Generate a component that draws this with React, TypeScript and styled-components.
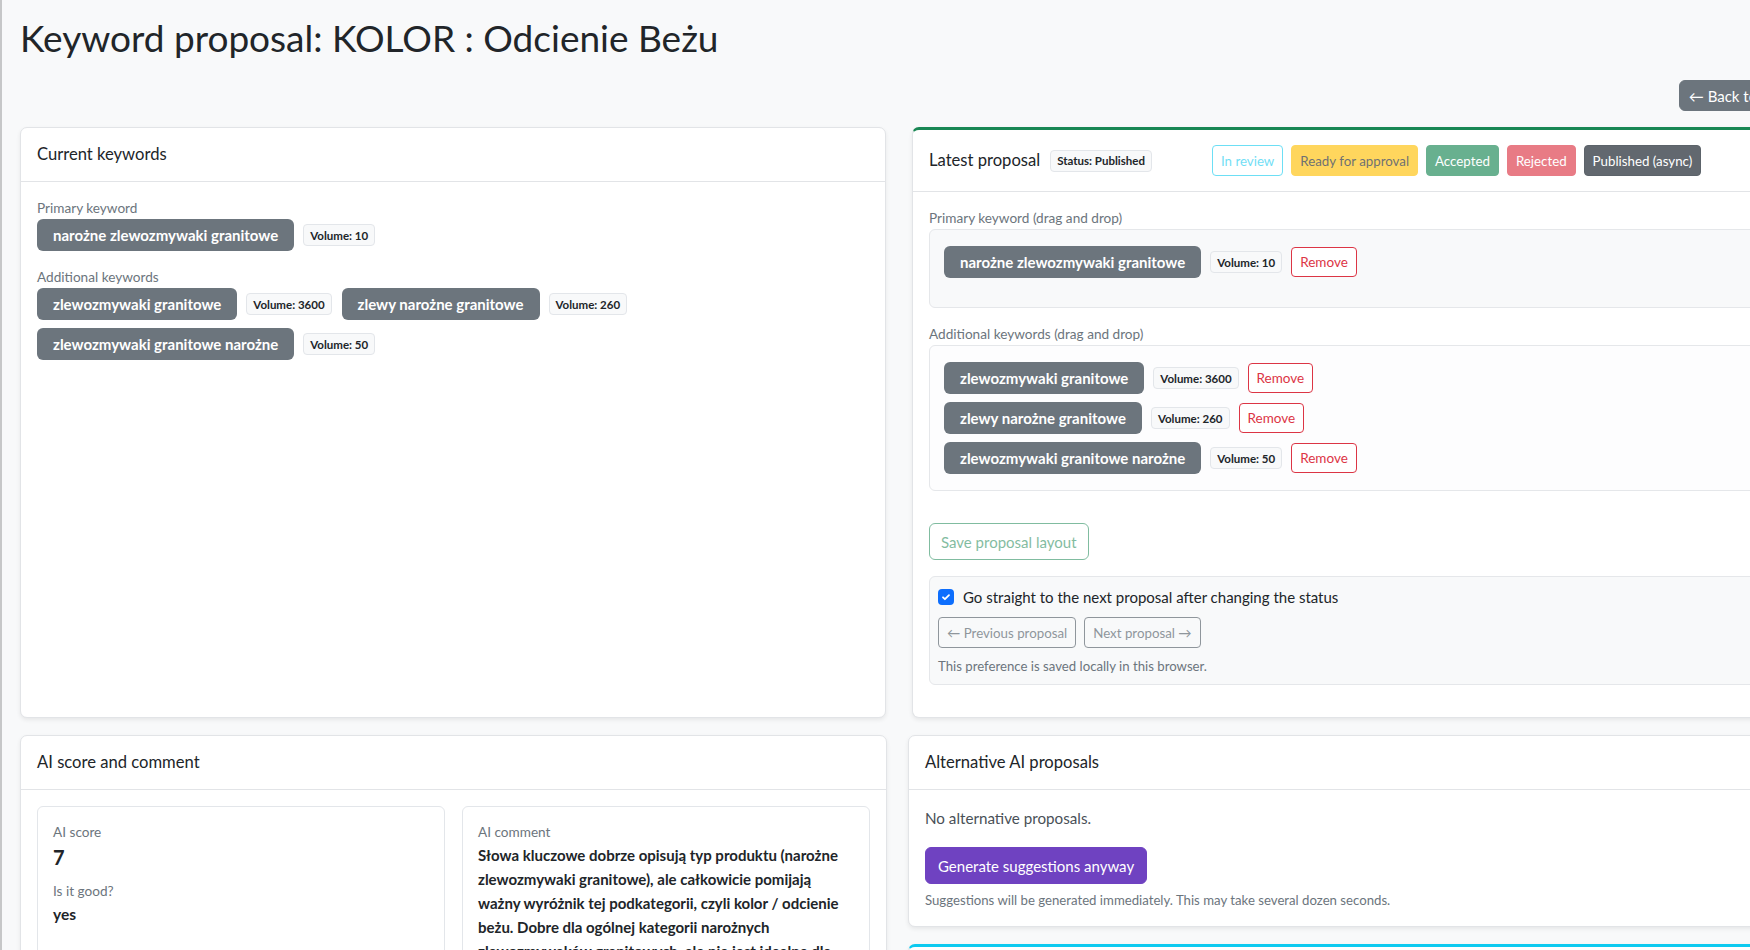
import React from 'react';
import styled, { createGlobalStyle } from 'styled-components';

const GlobalStyle = createGlobalStyle`
    html, body {
        margin: 0;
        padding: 0;
        background: #f8f9fa;
        overflow: hidden;
    }

    body {
        font-family: Lato, 'Liberation Sans', sans-serif;
        color: #212529;
    }

    * {
        box-sizing: border-box;
    }
`;

const Page = styled.div`
    width: 1812px;
    min-height: 950px;
    border-left: 2px solid #c6c7c8;
    padding: 14px 22px 0 18px;
`;

const Title = styled.h1`
    margin: 0;
    font-size: 37px;
    font-weight: 400;
    line-height: 48px;
`;

const Toolbar = styled.div`
    display: flex;
    justify-content: flex-end;
    margin-top: 18px;
`;

const BackButton = styled.button`
    height: 31px;
    padding: 0 9px;
    background: #6c757d;
    color: #fff;
    border: 1px solid #6c757d;
    border-radius: 6px;
    font-family: inherit;
    font-size: 15px;
`;

const TopRow = styled.div`
    display: grid;
    grid-template-columns: 866px 866px;
    column-gap: 26px;
    margin-top: 16px;
`;

const BottomRow = styled.div`
    display: grid;
    grid-template-columns: 867px 871px;
    column-gap: 21px;
    margin-top: 17px;
    align-items: start;
`;

const Column = styled.div`
    display: flex;
    flex-direction: column;
    gap: 17px;
`;

const Card = styled.section<{ $accent?: string; $minHeight?: number }>`
    background: #fff;
    border: 1px solid #e2e4e7;
    border-top: ${(p) => (p.$accent ? `3px solid ${p.$accent}` : '1px solid #e2e4e7')};
    border-radius: 7px;
    box-shadow: 0 2px 4px rgba(0, 0, 0, 0.075);
    display: flex;
    flex-direction: column;
    min-height: ${(p) => (p.$minHeight ? `${p.$minHeight}px` : 'auto')};
`;

const CardHeader = styled.div<{ $tall?: boolean }>`
    display: flex;
    align-items: center;
    gap: 10px;
    padding: ${(p) => (p.$tall ? '15px 16px' : '13px 16px')};
    border-bottom: 1px solid #e2e4e7;
    font-size: 16.6px;
    line-height: 27px;
`;

const CardBody = styled.div`
    display: flex;
    flex-direction: column;
    align-items: flex-start;
    padding: 16px;
`;

const Label = styled.div<{ $gap?: number }>`
    font-size: 13.6px;
    line-height: 21px;
    color: #6c757d;
    margin-top: ${(p) => p.$gap ?? 0}px;
`;

const KeywordWrap = styled.div`
    display: flex;
    flex-wrap: wrap;
    gap: 8px 10px;
`;

const KeywordPair = styled.div`
    display: flex;
    align-items: center;
    gap: 9px;
`;

const Chip = styled.span`
    display: inline-flex;
    align-items: center;
    height: 32px;
    padding: 0 16px;
    background: #6c757d;
    color: #fff;
    font-size: 15px;
    font-weight: 700;
    border-radius: 6px;
    white-space: nowrap;
`;

const Pill = styled.span`
    display: inline-flex;
    align-items: center;
    height: 22px;
    padding: 0 6px;
    background: #f8f9fa;
    border: 1px solid #e3e6ea;
    border-radius: 4px;
    font-size: 11.5px;
    font-weight: 700;
    color: #212529;
    white-space: nowrap;
`;

const HeaderTitle = styled.span`
    white-space: nowrap;
`;

const StatusGroup = styled.div`
    display: flex;
    gap: 8px;
    margin-left: 50px;
`;

const statusColors: Record<string, { bg: string; fg: string; border: string; opacity: number }> = {
    info: { bg: '#fff', fg: '#0dcaf0', border: '#0dcaf0', opacity: 0.6 },
    warning: { bg: '#ffc107', fg: '#212529', border: '#ffc107', opacity: 0.65 },
    success: { bg: '#198754', fg: '#fff', border: '#198754', opacity: 0.65 },
    danger: { bg: '#dc3545', fg: '#fff', border: '#dc3545', opacity: 0.65 },
    current: { bg: '#62686f', fg: '#fff', border: '#5c636a', opacity: 1 },
};

const StatusButton = styled.button<{ $variant: string }>`
    height: 31px;
    padding: 0 8px;
    border-radius: 4px;
    font-family: inherit;
    font-size: 13.3px;
    white-space: nowrap;
    background: ${(p) => statusColors[p.$variant].bg};
    color: ${(p) => statusColors[p.$variant].fg};
    border: 1px solid ${(p) => statusColors[p.$variant].border};
    opacity: ${(p) => statusColors[p.$variant].opacity};
`;

const DropZone = styled.div<{ $tone: 'gray' | 'white'; $minHeight?: number }>`
    align-self: stretch;
    display: flex;
    flex-direction: column;
    gap: 8px;
    padding: 16px 14px;
    min-height: ${(p) => (p.$minHeight ? `${p.$minHeight}px` : 'auto')};
    background: ${(p) => (p.$tone === 'gray' ? '#f8f9fa' : '#fdfdfe')};
    border: 1px solid #e5e7ea;
    border-radius: 6px;
`;

const RemoveButton = styled.button`
    height: 30px;
    padding: 0 8px;
    background: #fff;
    color: #dc3545;
    border: 1px solid #dc3545;
    border-radius: 4px;
    font-family: inherit;
    font-size: 13.5px;
`;

const SaveButton = styled.button`
    margin-top: 32px;
    height: 37px;
    padding: 0 11px;
    background: transparent;
    color: #198754;
    border: 1px solid #198754;
    border-radius: 6px;
    font-family: inherit;
    font-size: 15px;
    opacity: 0.55;
`;

const PrefBox = styled.div`
    align-self: stretch;
    margin: 16px 0;
    padding: 8px;
    background: #f8f9fa;
    border: 1px solid #e5e7ea;
    border-radius: 6px;
`;

const CheckRow = styled.label`
    display: flex;
    align-items: center;
    gap: 9px;
    font-size: 15px;
    line-height: 24px;
`;

const CheckBox = styled.span`
    display: inline-flex;
    align-items: center;
    justify-content: center;
    width: 16px;
    height: 16px;
    background: #0d6efd;
    border-radius: 4px;
`;

const NavRow = styled.div`
    display: flex;
    gap: 8px;
    margin-top: 8px;
`;

const NavButton = styled.button`
    height: 31px;
    padding: 0 8px;
    background: transparent;
    color: #6c757d;
    border: 1px solid #6c757d;
    border-radius: 4px;
    font-family: inherit;
    font-size: 13.3px;
    opacity: 0.75;
`;

const Hint = styled.div<{ $gap?: number }>`
    margin-top: ${(p) => p.$gap ?? 8}px;
    font-size: 13.2px;
    line-height: 20px;
    color: #6c757d;
`;

const InnerGrid = styled.div`
    align-self: stretch;
    display: grid;
    grid-template-columns: 1fr 1fr;
    gap: 17px;
`;

const InnerCard = styled.div`
    border: 1px solid #e3e6ea;
    border-radius: 6px;
    padding: 15px;
    min-height: 200px;
`;

const ScoreValue = styled.div`
    font-size: 20px;
    font-weight: 700;
    line-height: 29px;
`;

const Answer = styled.div`
    font-size: 15.5px;
    font-weight: 700;
    line-height: 24px;
`;

const Comment = styled.p`
    margin: 0;
    font-size: 15px;
    font-weight: 700;
    line-height: 24px;
    white-space: nowrap;
`;

const Paragraph = styled.p`
    margin: 0 0 17px;
    font-size: 15.2px;
    line-height: 24px;
    color: #495057;
`;

const GenerateButton = styled.button`
    height: 37px;
    padding: 0 12px;
    background: #6f42c1;
    color: #fff;
    border: 1px solid #6f42c1;
    border-radius: 6px;
    font-family: inherit;
    font-size: 15px;
`;

const current = [
    { text: 'zlewozmywaki granitowe', volume: 3600 },
    { text: 'zlewy narożne granitowe', volume: 260 },
    { text: 'zlewozmywaki granitowe narożne', volume: 50 },
];

const statuses = [
    { label: 'In review', variant: 'info' },
    { label: 'Ready for approval', variant: 'warning' },
    { label: 'Accepted', variant: 'success' },
    { label: 'Rejected', variant: 'danger' },
    { label: 'Published (async)', variant: 'current' },
];

const commentLines = [
    'Słowa kluczowe dobrze opisują typ produktu (narożne',
    'zlewozmywaki granitowe), ale całkowicie pomijają',
    'ważny wyróżnik tej podkategorii, czyli kolor / odcienie',
    'beżu. Dobre dla ogólnej kategorii narożnych',
    'zlewozmywaków granitowych, ale nie jest idealne dla',
    'podkategorii beżowej.',
];

function KeywordLine({ text, volume, removable }: { text: string; volume: number; removable?: boolean }) {
    return (
        <KeywordPair>
            <Chip>{text}</Chip>
            <Pill>Volume: {volume}</Pill>
            {removable && <RemoveButton>Remove</RemoveButton>}
        </KeywordPair>
    );
}

function App(): React.ReactElement {
    return (
        <Page>
            <GlobalStyle />
            <Title>Keyword proposal: KOLOR : Odcienie Beżu</Title>
            <Toolbar>
                <BackButton>← Back to list</BackButton>
            </Toolbar>

            <TopRow>
                <Card>
                    <CardHeader>Current keywords</CardHeader>
                    <CardBody>
                        <Label>Primary keyword</Label>
                        <KeywordLine text="narożne zlewozmywaki granitowe" volume={10} />
                        <Label $gap={16}>Additional keywords</Label>
                        <KeywordWrap>
                            {current.map((k) => (
                                <KeywordLine key={k.text} text={k.text} volume={k.volume} />
                            ))}
                        </KeywordWrap>
                    </CardBody>
                </Card>

                <Card $accent="#198754">
                    <CardHeader $tall>
                        <HeaderTitle>Latest proposal</HeaderTitle>
                        <Pill>Status: Published</Pill>
                        <StatusGroup>
                            {statuses.map((s) => (
                                <StatusButton key={s.label} $variant={s.variant}>
                                    {s.label}
                                </StatusButton>
                            ))}
                        </StatusGroup>
                    </CardHeader>
                    <CardBody>
                        <Label>Primary keyword (drag and drop)</Label>
                        <DropZone $tone="gray" $minHeight={79}>
                            <KeywordLine text="narożne zlewozmywaki granitowe" volume={10} removable />
                        </DropZone>
                        <Label $gap={16}>Additional keywords (drag and drop)</Label>
                        <DropZone $tone="white">
                            {current.map((k) => (
                                <KeywordLine key={k.text} text={k.text} volume={k.volume} removable />
                            ))}
                        </DropZone>
                        <SaveButton>Save proposal layout</SaveButton>
                        <PrefBox>
                            <CheckRow>
                                <CheckBox>
                                    <svg width="12" height="12" viewBox="0 0 20 20">
                                        <path
                                            d="M5 10.5l3.2 3.2L15 7"
                                            fill="none"
                                            stroke="#fff"
                                            strokeWidth="3"
                                            strokeLinecap="round"
                                            strokeLinejoin="round"
                                        />
                                    </svg>
                                </CheckBox>
                                Go straight to the next proposal after changing the status
                            </CheckRow>
                            <NavRow>
                                <NavButton>← Previous proposal</NavButton>
                                <NavButton>Next proposal →</NavButton>
                            </NavRow>
                            <Hint>This preference is saved locally in this browser.</Hint>
                        </PrefBox>
                    </CardBody>
                </Card>
            </TopRow>

            <BottomRow>
                <Card>
                    <CardHeader>AI score and comment</CardHeader>
                    <CardBody>
                        <InnerGrid>
                            <InnerCard>
                                <Label>AI score</Label>
                                <ScoreValue>7</ScoreValue>
                                <Label $gap={9}>Is it good?</Label>
                                <Answer>yes</Answer>
                            </InnerCard>
                            <InnerCard>
                                <Label>AI comment</Label>
                                <Comment>
                                    {commentLines.map((line, i) => (
                                        <React.Fragment key={i}>
                                            {line}
                                            {i < commentLines.length - 1 && <br />}
                                        </React.Fragment>
                                    ))}
                                </Comment>
                            </InnerCard>
                        </InnerGrid>
                    </CardBody>
                </Card>

                <Column>
                    <Card>
                        <CardHeader>Alternative AI proposals</CardHeader>
                        <CardBody>
                            <Paragraph>No alternative proposals.</Paragraph>
                            <GenerateButton>Generate suggestions anyway</GenerateButton>
                            <Hint $gap={6}>
                                Suggestions will be generated immediately. This may take several dozen
                                seconds.
                            </Hint>
                        </CardBody>
                    </Card>
                    <Card $accent="#0dcaf0" $minHeight={120} />
                </Column>
            </BottomRow>
        </Page>
    );
}

export default App;
